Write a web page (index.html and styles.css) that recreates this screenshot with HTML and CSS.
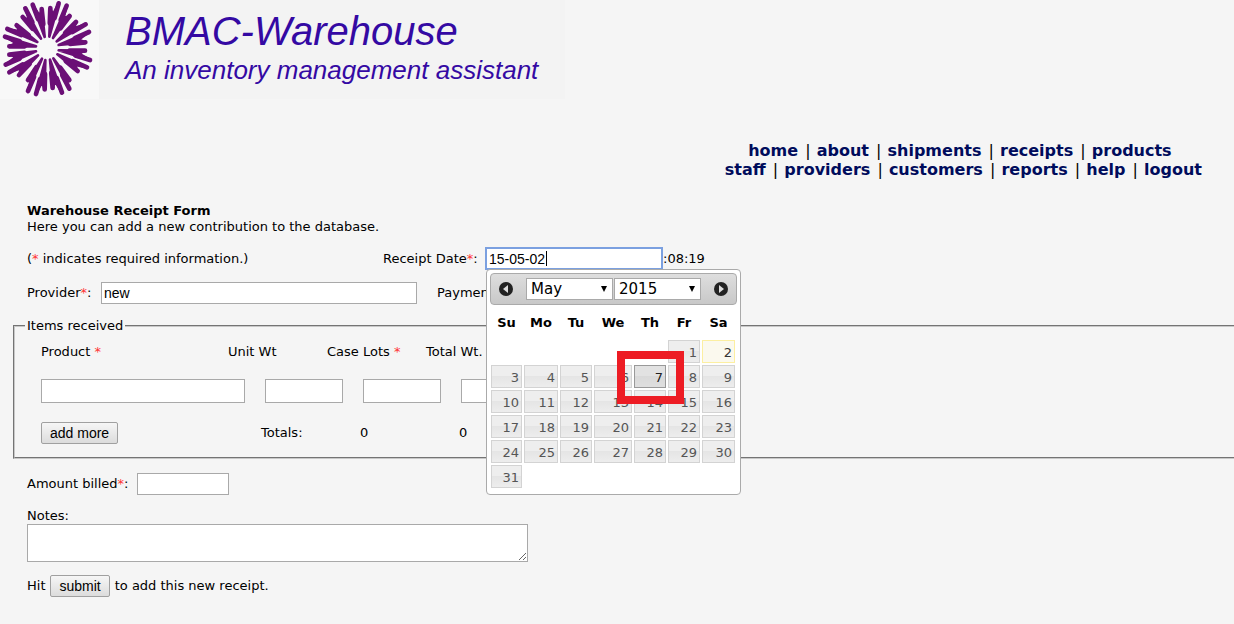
FILE: index.html
```
<!DOCTYPE html>
<html lang="en">
<head>
<meta charset="utf-8">
<title>BMAC-Warehouse</title>
<link rel="stylesheet" href="styles.css">
</head>
<body>
<header class="banner">
  <svg class="logo" viewBox="0 0 297 297" aria-hidden="true">
    <rect width="297" height="297" fill="#f8f8f8"/>
    <path class="petals" d="M148 110 151 24 158 45 176 10ZM159 114 200 17 190 55 209 48ZM170 124 228 66 222 85 257 73ZM176 135 267 96 236 119 256 127ZM176 151 255 152 237 161 270 180ZM172 163 261 202 224 194 233 213ZM160 175 208 240 192 228 208 266ZM150 179 186 278 165 244 158 264ZM136 180 134 268 126 246 108 282ZM126 176 84 240 97 231 84 273ZM114 166 57 225 64 204 28 217ZM108 154 17 194 49 170 28 164ZM108 139 28 139 48 129 15 110ZM112 126 22 87 59 94 50 76ZM123 116 68 51 88 61 76 25ZM134 111 98 14 119 48 125 27Z"/>
    <path class="rods" d="M151 24 148 110M176 10 148 110M200 17 159 114M209 48 159 114M228 66 170 124M257 73 170 124M267 96 176 135M256 127 176 135M255 152 176 151M270 180 176 151M261 202 172 163M233 213 172 163M208 240 160 175M208 266 160 175M186 278 150 179M158 264 150 179M134 268 136 180M108 282 136 180M84 240 126 176M84 273 126 176M57 225 114 166M28 217 114 166M17 194 108 154M28 164 108 154M28 139 108 139M15 110 108 139M22 87 112 126M50 76 112 126M68 51 123 116M76 25 123 116M98 14 134 111M125 27 134 111"/>
  </svg>
  <div class="brand">
    <h1 class="brand-name">BMAC-Warehouse</h1>
    <p class="brand-tag">An inventory management assistant</p>
  </div>
</header>

<nav class="menu">
  <div class="menu-links">
    <div class="menu-first"><a href="#">home</a> <span class="sep">|</span> <a href="#">about</a> <span class="sep">|</span> <a href="#">shipments</a> <span class="sep">|</span> <a href="#">receipts</a> <span class="sep">|</span> <a href="#">products</a></div>
    <div><a href="#">staff</a> <span class="sep">|</span> <a href="#">providers</a> <span class="sep">|</span> <a href="#">customers</a> <span class="sep">|</span> <a href="#">reports</a> <span class="sep">|</span> <a href="#">help</a> <span class="sep">|</span> <a href="#">logout</a></div>
  </div>
</nav>

<main>
  <form class="receipt">
    <div class="intro">
      <h2 class="title">Warehouse Receipt Form</h2>
      <p>Here you can add a new contribution to the database.</p>
    </div>

    <div class="row date-row">
      <span class="hint">(<i class="req">*</i> indicates required information.)</span>
      <label class="date-label" for="date">Receipt Date<i class="req">*</i>:</label>
      <div class="date-field">
        <input id="date" class="box date" type="text" value="15-05-02">
        <span class="caret"></span>
        <div class="picker">
          <div class="picker-head">
            <button type="button" class="arrow" aria-label="Previous month"><svg viewBox="0 0 16 16"><circle cx="8" cy="8" r="7"/><path d="M10 4v8L5 8z"/></svg></button>
            <div class="selects">
              <span class="select"><select aria-label="Month"><option>May</option></select></span>
              <span class="select"><select aria-label="Year"><option>2015</option></select></span>
            </div>
            <button type="button" class="arrow" aria-label="Next month"><svg viewBox="0 0 16 16"><circle cx="8" cy="8" r="7"/><path d="M6 4v8l5-4z"/></svg></button>
          </div>
          <table class="days">
            <colgroup><col class="c33"><col class="c36"><col class="c34"><col class="c40"><col class="c34"><col class="c34"><col class="c35"></colgroup>
            <thead><tr><th>Su</th><th>Mo</th><th>Tu</th><th>We</th><th>Th</th><th>Fr</th><th>Sa</th></tr></thead>
            <tbody>
              <tr><td></td><td></td><td></td><td></td><td></td><td><a href="#">1</a></td><td><a href="#" class="today">2</a></td></tr>
              <tr><td><a href="#">3</a></td><td><a href="#">4</a></td><td><a href="#">5</a></td><td><a href="#">6</a></td><td><a href="#" class="hover">7</a></td><td><a href="#">8</a></td><td><a href="#">9</a></td></tr>
              <tr><td><a href="#">10</a></td><td><a href="#">11</a></td><td><a href="#">12</a></td><td><a href="#">13</a></td><td><a href="#">14</a></td><td><a href="#">15</a></td><td><a href="#">16</a></td></tr>
              <tr><td><a href="#">17</a></td><td><a href="#">18</a></td><td><a href="#">19</a></td><td><a href="#">20</a></td><td><a href="#">21</a></td><td><a href="#">22</a></td><td><a href="#">23</a></td></tr>
              <tr><td><a href="#">24</a></td><td><a href="#">25</a></td><td><a href="#">26</a></td><td><a href="#">27</a></td><td><a href="#">28</a></td><td><a href="#">29</a></td><td><a href="#">30</a></td></tr>
              <tr><td><a href="#">31</a></td><td></td><td></td><td></td><td></td><td></td><td></td></tr>
            </tbody>
          </table>
          <div class="marker"></div>
        </div>
      </div>
      <span class="time">:08:19</span>
    </div>

    <div class="row">
      <label class="provider-label" for="provider">Provider<i class="req">*</i>:</label>
      <input id="provider" class="box provider" type="text" value="new">
      <span class="payment">Payment</span>
    </div>

    <fieldset class="items">
      <legend>Items received</legend>
      <div class="cols heads">
        <span class="product-head">Product <i class="req">*</i></span>
        <span class="col">Unit Wt</span>
        <span class="col">Case Lots <i class="req">*</i></span>
        <span class="col">Total Wt.</span>
      </div>
      <div class="cols entries">
        <input class="box product" type="text" aria-label="Product">
        <input class="box num" type="text" aria-label="Unit Wt">
        <input class="box num" type="text" aria-label="Case Lots">
        <input class="box num" type="text" aria-label="Total Wt.">
      </div>
      <div class="cols totals">
        <div class="more"><button type="button" class="btn">add more</button></div>
        <span class="col">Totals:</span>
        <span class="col">0</span>
        <span class="col">0</span>
      </div>
    </fieldset>

    <div class="row">
      <label class="amount-label" for="amount">Amount billed<i class="req">*</i>:</label>
      <input id="amount" class="box amount" type="text">
    </div>

    <div class="notes-block">
      <label for="notes">Notes:</label>
      <textarea id="notes" class="box notes"></textarea>
    </div>

    <div class="row">
      <span>Hit</span>
      <button type="submit" class="btn">submit</button>
      <span>to add this new receipt.</span>
    </div>
  </form>
</main>
</body>
</html>
```
FILE: styles.css
```
* { box-sizing: border-box; }

body {
  margin: 0;
  background: #f5f5f5;
  color: #000;
  font: 13px/16px "DejaVu Sans", Verdana, sans-serif;
  overflow-x: hidden;
}

h1, h2, p { margin: 0; }

.banner {
  display: flex;
  gap: 26px;
  width: fit-content;
  padding-right: 27px;
  background: #f3f3f3;
}
.logo { width: 99px; height: 99px; }
.petals { fill: #6b0f76; stroke: #6b0f76; stroke-width: 8px; stroke-linejoin: round; }
.rods { fill: none; stroke: #6b0f76; stroke-width: 14px; stroke-linecap: round; stroke-dasharray: 46px 300px; }
.brand {
  padding-top: 12px;
  color: #3409a3;
  font-family: "Liberation Sans", Arial, sans-serif;
  font-style: italic;
}
.brand-name { font-size: 40px; line-height: 38px; font-weight: 400; }
.brand-tag { font-size: 26px; line-height: 40px; }

.menu {
  display: flex;
  justify-content: flex-end;
  padding: 42px 32px 0 0;
  font-size: 16px;
  line-height: 19px;
  text-align: center;
}
.menu-first { padding-right: 7px; }
.menu a { color: #000c5c; font-weight: 700; text-decoration: none; }
.sep { padding: 0 1px 0 2px; }

.receipt {
  display: flex;
  flex-direction: column;
  gap: 12px;
  padding: 24px 0 24px 27px;
}
.title { font-size: 13px; line-height: 16px; }
.row { display: flex; align-items: center; gap: 5px; }
.req { color: #f33; font-style: normal; }
.hint { width: 351px; }
.date-label { width: 97px; }
.provider-label { width: 69px; }
.amount-label { width: 105px; }
.date-field { position: relative; }
.date-row { white-space: nowrap; }
.time { margin-left: -5px; }

.box {
  height: 22px;
  padding: 1px 2px;
  border: 1px solid #a9a9a9;
  background: #fff;
  color: #000;
  font: 14px/18px "Liberation Sans", Arial, sans-serif;
}
.date { display: block; width: 178px; height: 23px; border: 2px solid #7ba0e0; padding: 0 2px; }
.date:focus { outline: 0; }
.caret { position: absolute; left: 61px; top: 4px; width: 1px; height: 15px; background: #000; }
.provider { width: 316px; }
.payment { margin-left: 15px; }
.amount { width: 92px; }

.items {
  min-width: 0;
  margin: 2px -2px 2px -14px;
  padding: 10px 0 13px 26px;
  border: 2px groove #c8c8c8;
}
.items legend { margin-left: -16px; padding: 0 2px; }
.cols { display: flex; align-items: center; }
.col { width: 99px; flex: none; }
.product-head { width: 187px; }
.entries { gap: 20px; margin: 19px 0; }
.entries .box { height: 24px; }
.product { width: 204px; }
.num { width: 78px; }
.more { width: 220px; }
.btn {
  height: 22px;
  padding: 0 8px;
  border: 1px solid #a0a0a0;
  border-radius: 2px;
  background: linear-gradient(#f6f6f6, #dcdcdc);
  color: #000;
  font: 14px/18px "Liberation Sans", Arial, sans-serif;
}

.notes-block { display: flex; flex-direction: column; align-items: flex-start; margin: 1px 0; }
.notes { width: 501px; height: 38px; }

.picker {
  position: absolute;
  z-index: 2;
  left: 1px;
  top: 22px;
  width: 255px;
  padding: 3px 3px 5px;
  border: 1px solid #aaa;
  border-radius: 4px;
  background: #fff;
}
.picker-head {
  display: flex;
  align-items: center;
  justify-content: space-between;
  height: 32px;
  padding: 0 6px;
  border: 1px solid #aaa;
  border-radius: 4px;
  background: linear-gradient(#dedede, #c8c8c8);
}
.arrow { width: 18px; height: 18px; padding: 1px; border: 0; background: none; }
.arrow svg { display: block; }
.arrow circle { fill: #222; }
.arrow path { fill: #ddd; }
.selects { display: flex; gap: 1px; }
.select { position: relative; }
.select::after {
  content: "";
  position: absolute;
  right: 6px;
  top: 8px;
  border: 3px solid transparent;
  border-top: 6px solid #000;
  border-bottom: 0;
}
.select select {
  display: block;
  width: 87px;
  height: 22px;
  padding: 0 4px;
  appearance: none;
  border: 1px solid #a9a9a9;
  border-radius: 0;
  background: #fff;
  color: #000;
  font: 15px/20px "DejaVu Sans", Verdana, sans-serif;
}

.days { width: 246px; table-layout: fixed; border-collapse: collapse; }
.c33 { width: 33px; }
.c34 { width: 34px; }
.c35 { width: 35px; }
.c36 { width: 36px; }
.c40 { width: 40px; }
.days th { height: 34px; padding: 2px 0 0; font-weight: 700; }
.days td { height: 25px; padding: 1px; }
.days a {
  display: block;
  height: 23px;
  padding: 4px 2px 0;
  border: 1px solid #d3d3d3;
  background: linear-gradient(#eee 50%, #e5e5e5 50%, #ededed);
  color: #555;
  text-align: right;
  text-decoration: none;
}
.days a.today { border-color: #fcefa1; background: #fbf9ee; color: #363636; }
.days a.hover { border-color: #999; background: linear-gradient(#e2e2e2 50%, #d9d9d9 50%, #dfdfdf); color: #212121; }
.marker {
  position: absolute;
  left: 130px;
  top: 81px;
  width: 67px;
  height: 53px;
  border: 8px solid #ed1c24;
}
```
